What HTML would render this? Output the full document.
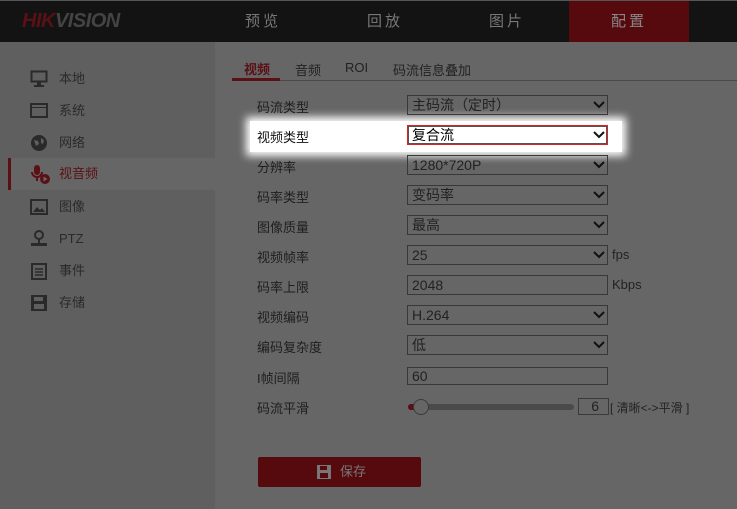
<!DOCTYPE html>
<html><head><meta charset="utf-8"><style>
body{margin:0;width:737px;height:509px;overflow:hidden;background:#666;font-family:"Liberation Sans","Noto Sans CJK SC",sans-serif;font-size:13px;color:#222;position:relative}
.hdr{position:absolute;left:0;top:0;width:737px;height:42px;background:#131313;border-top:1px solid #555;box-sizing:border-box}
.logo{position:absolute;left:22px;top:9px;font:italic bold 20px "Liberation Sans",sans-serif;letter-spacing:-0.5px}
.nav{position:absolute;top:0;height:41px;width:120px;line-height:41px;text-align:center;color:#777;font-size:15px;letter-spacing:3px}
.side{position:absolute;left:0;top:42px;width:215px;height:467px;background:#5f5f5f}
.si{position:absolute;left:8px;width:207px;height:32px;line-height:32px}
.si span{position:absolute;left:51px;color:#2a2a2a}
.si svg{position:absolute;left:22px;top:7px}
.lab{position:absolute;left:257px;color:#1e1e1e}
.sel{position:absolute;left:407px;width:195px;height:18px;border:1px solid #383838;line-height:18px;padding-left:4px;box-sizing:content-box;color:#222;font-size:14px}
.sel .ar{position:absolute;right:1px;top:2px}
.unit{position:absolute;left:612px;color:#222}
</style></head><body>
<div class="hdr">
<div class="logo"><span style="color:#5a1014">HIK</span><span style="color:#444">VISION</span></div>
<div class="nav" style="left:203px">预览</div>
<div class="nav" style="left:325px">回放</div>
<div class="nav" style="left:447px">图片</div>
<div class="nav" style="left:569px;background:#560a0e;color:#888">配置</div>
</div>
<div class="side">
<div class="si" style="top:21px"><svg width="18" height="18"><rect x="1.5" y="1.5" width="15" height="10" fill="none" stroke="#2a2a2a" stroke-width="2"/><rect x="7" y="12" width="4" height="3" fill="#2a2a2a"/><rect x="4" y="15" width="10" height="2" fill="#2a2a2a"/></svg><span>本地</span></div>
<div class="si" style="top:53px"><svg width="18" height="18"><rect x="1" y="2" width="16" height="13" fill="none" stroke="#2a2a2a" stroke-width="2"/><rect x="1" y="5" width="16" height="1" fill="#2a2a2a"/></svg><span>系统</span></div>
<div class="si" style="top:85px"><svg width="18" height="18"><circle cx="9" cy="9" r="8" fill="#2a2a2a"/><path d="M4 6 l4 1 1 3 -3 2z M11 4 l3 2 -1 4 -2 -1z" fill="#5f5f5f"/></svg><span>网络</span></div>
<div class="si" style="top:116px;background:#666"><div style="position:absolute;left:0;top:0;width:3px;height:32px;background:#5a1014"></div><svg width="22" height="20"><rect x="4" y="0" width="6" height="10" rx="3" fill="#5a1014"/><path d="M2 7 a5 5 0 0 0 10 0 M7 12 v4" stroke="#5a1014" stroke-width="2" fill="none"/><circle cx="15" cy="14" r="5" fill="#5a1014"/><path d="M13.5 11.5 l4 2.5 -4 2.5z" fill="#666"/></svg><span style="color:#5a1014">视音频</span></div>
<div class="si" style="top:149px"><svg width="18" height="18"><rect x="1" y="2" width="16" height="14" fill="none" stroke="#2a2a2a" stroke-width="2"/><path d="M3 14 l4-5 3 3 2-2 3 4z" fill="#2a2a2a"/></svg><span>图像</span></div>
<div class="si" style="top:181px"><svg width="18" height="18"><circle cx="9" cy="5" r="4" fill="none" stroke="#2a2a2a" stroke-width="2"/><rect x="8" y="9" width="2" height="4" fill="#2a2a2a"/><rect x="1" y="13" width="16" height="3" fill="#2a2a2a"/></svg><span>PTZ</span></div>
<div class="si" style="top:213px"><svg width="18" height="18"><rect x="2" y="2" width="14" height="15" fill="none" stroke="#2a2a2a" stroke-width="2"/><path d="M5 7h8M5 10h8M5 13h8" stroke="#2a2a2a" stroke-width="1.5"/></svg><span>事件</span></div>
<div class="si" style="top:245px"><svg width="18" height="18"><rect x="1" y="1" width="16" height="16" fill="#2a2a2a"/><rect x="4" y="3" width="9" height="4" fill="#5f5f5f"/><rect x="4" y="10" width="10" height="5" fill="#5f5f5f"/></svg><span>存储</span></div>
</div>
<div style="position:absolute;left:232px;top:80px;width:505px;height:1px;background:#4a4a4a"></div>
<div style="position:absolute;left:232px;top:78px;width:48px;height:3px;background:#5a1014"></div>
<div style="position:absolute;left:244px;top:59px;color:#5a1014;font-weight:bold">视频</div>
<div style="position:absolute;left:295px;top:60px;color:#222">音频</div>
<div style="position:absolute;left:345px;top:60px;color:#222">ROI</div>
<div style="position:absolute;left:393px;top:60px;color:#222">码流信息叠加</div>

<div style="position:absolute;left:250px;top:121px;width:372px;height:31px;background:#fff;box-shadow:0 0 8px 4px #fff"></div>

<div class="lab" style="top:97px">码流类型</div><div class="sel" style="top:95px">主码流（定时）<svg class="ar" width="14" height="14"><path d="M2 4l5 5 5-5" stroke="#111" stroke-width="2" fill="none"/></svg></div>
<div class="lab" style="top:127px;color:#111">视频类型</div><div class="sel" style="top:125px;border-color:#d22;background:#fff;color:#000;outline:1px solid #555;outline-offset:-2px">复合流<svg class="ar" width="14" height="14"><path d="M2 4l5 5 5-5" stroke="#111" stroke-width="2" fill="none"/></svg></div>
<div class="lab" style="top:157px">分辨率</div><div class="sel" style="top:155px">1280*720P<svg class="ar" width="14" height="14"><path d="M2 4l5 5 5-5" stroke="#111" stroke-width="2" fill="none"/></svg></div>
<div class="lab" style="top:187px">码率类型</div><div class="sel" style="top:185px">变码率<svg class="ar" width="14" height="14"><path d="M2 4l5 5 5-5" stroke="#111" stroke-width="2" fill="none"/></svg></div>
<div class="lab" style="top:217px">图像质量</div><div class="sel" style="top:215px">最高<svg class="ar" width="14" height="14"><path d="M2 4l5 5 5-5" stroke="#111" stroke-width="2" fill="none"/></svg></div>
<div class="lab" style="top:247px">视频帧率</div><div class="sel" style="top:245px">25<svg class="ar" width="14" height="14"><path d="M2 4l5 5 5-5" stroke="#111" stroke-width="2" fill="none"/></svg></div><div class="unit" style="top:247px">fps</div>
<div class="lab" style="top:277px">码率上限</div><div class="sel" style="top:275px">2048</div><div class="unit" style="top:277px">Kbps</div>
<div class="lab" style="top:307px">视频编码</div><div class="sel" style="top:305px">H.264<svg class="ar" width="14" height="14"><path d="M2 4l5 5 5-5" stroke="#111" stroke-width="2" fill="none"/></svg></div>
<div class="lab" style="top:337px">编码复杂度</div><div class="sel" style="top:335px">低<svg class="ar" width="14" height="14"><path d="M2 4l5 5 5-5" stroke="#111" stroke-width="2" fill="none"/></svg></div>
<div class="lab" style="top:368px">I帧间隔</div><div class="sel" style="top:367px;height:16px;line-height:16px">60</div>
<div class="lab" style="top:398px">码流平滑</div>
<div style="position:absolute;left:408px;top:404px;width:166px;height:6px;border-radius:3px;background:#4a4a4a"></div>
<div style="position:absolute;left:408px;top:404px;width:10px;height:6px;border-radius:3px;background:#5a1014"></div>
<div style="position:absolute;left:413px;top:399px;width:14px;height:14px;border-radius:50%;background:#666;border:1px solid #3a3a3a"></div>
<div style="position:absolute;left:578px;top:398px;width:29px;height:15px;border:1px solid #3a3a3a;text-align:right;line-height:15px;color:#222;font-size:14px"><span style="margin-right:9px">6</span></div>
<div style="position:absolute;left:610px;top:399px;color:#222;font-size:12px">[ 清晰&lt;-&gt;平滑 ]</div>
<div style="position:absolute;left:258px;top:457px;width:163px;height:30px;background:#560a0e;border-radius:2px;color:#777;line-height:30px;font-size:13px"><svg style="position:absolute;left:59px;top:8px" width="14" height="14"><rect width="14" height="14" fill="#777"/><rect x="3" y="1" width="7" height="4" fill="#560a0e"/><rect x="3" y="8" width="8" height="5" fill="#560a0e"/></svg><span style="position:absolute;left:82px">保存</span></div>
</body></html>
